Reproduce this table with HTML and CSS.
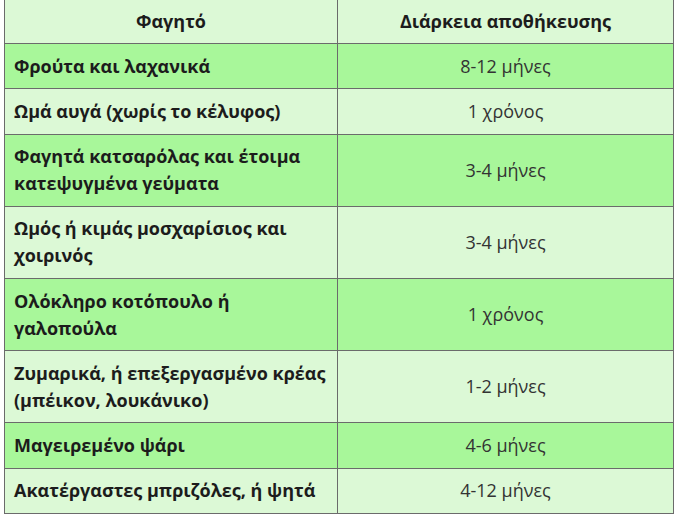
FILE: index.html
```html
<!DOCTYPE html>
<html lang="el">
<head>
<meta charset="utf-8">
<title>Διάρκεια αποθήκευσης</title>
<link rel="stylesheet" href="styles.css">
</head>
<body>
<table class="storage">
  <colgroup>
    <col class="col-food">
    <col class="col-time">
  </colgroup>
  <thead>
    <tr><th>Φαγητό</th><th>Διάρκεια αποθήκευσης</th></tr>
  </thead>
  <tbody>
    <tr class="alt"><td class="food">Φρούτα και λαχανικά</td><td class="time">8-12 μήνες</td></tr>
    <tr><td class="food">Ωμά αυγά (χωρίς το κέλυφος)</td><td class="time">1 χρόνος</td></tr>
    <tr class="alt"><td class="food">Φαγητά κατσαρόλας και έτοιμα κατεψυγμένα γεύματα</td><td class="time">3-4 μήνες</td></tr>
    <tr><td class="food">Ωμός ή κιμάς μοσχαρίσιος και χοιρινός</td><td class="time">3-4 μήνες</td></tr>
    <tr class="alt"><td class="food">Ολόκληρο κοτόπουλο ή γαλοπούλα</td><td class="time">1 χρόνος</td></tr>
    <tr><td class="food">Ζυμαρικά, ή επεξεργασμένο κρέας (μπέικον, λουκάνικο)</td><td class="time">1-2 μήνες</td></tr>
    <tr class="alt"><td class="food">Μαγειρεμένο ψάρι</td><td class="time">4-6 μήνες</td></tr>
    <tr><td class="food">Ακατέργαστες μπριζόλες, ή ψητά</td><td class="time">4-12 μήνες</td></tr>
  </tbody>
</table>
</body>
</html>
```
FILE: styles.css
```css
html, body {
  margin: 0;
  padding: 0;
  background: #ffffff;
}
body {
  padding: 0 1px 0 4px;
  font-family: "Open Sans", "Noto Sans", sans-serif;
  font-size: 18px;
  color: #222;
}
.storage {
  width: 669px;
  margin-top: -2px;
  border-collapse: collapse;
  table-layout: fixed;
}
.col-food {
  width: 333px;
}
.col-time {
  width: 336px;
}
.storage th,
.storage td {
  border: 1px solid #6b6b6b;
  padding: 8.6px 9px;
  line-height: 27px;
  background: #dcf9d6;
  vertical-align: middle;
}
.storage th {
  font-weight: 700;
  text-align: center;
  color: #1c1c1c;
}
.storage tr.alt td {
  background: #a8f79a;
}
.storage td.food {
  font-weight: 700;
  text-align: left;
  color: #1c1c1c;
}
.storage td.time {
  text-align: center;
  color: #333;
}
```
